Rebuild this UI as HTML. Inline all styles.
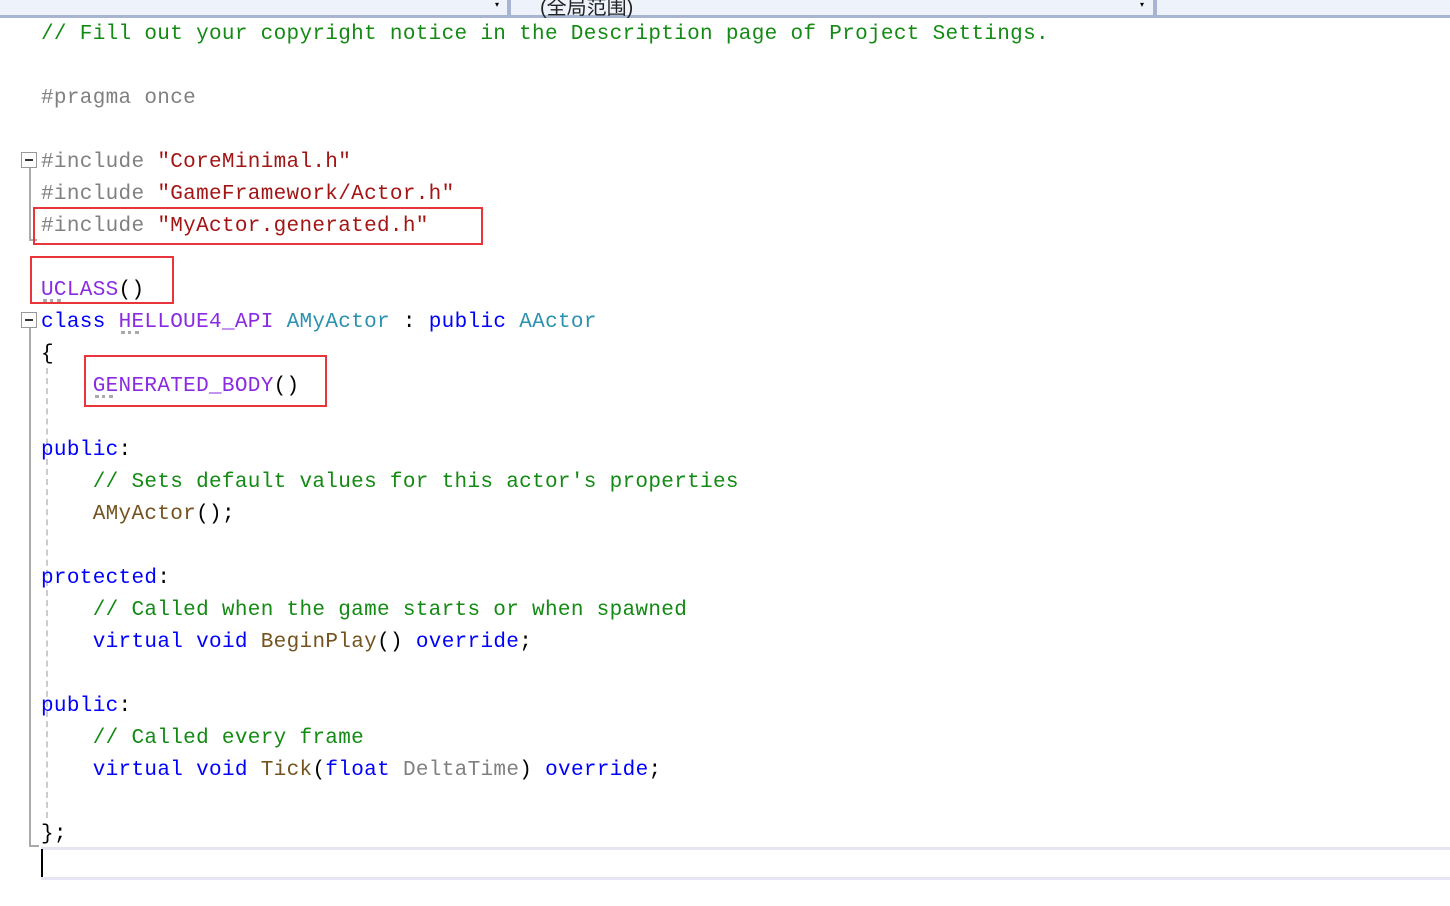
<!DOCTYPE html>
<html><head><meta charset="utf-8"><style>
html,body{margin:0;padding:0;background:#fff;width:1450px;height:906px;overflow:hidden;position:relative}
.bar{position:absolute;left:0;top:0;width:1450px;height:15px;background:#eef2fb;border-bottom:3px solid #a7b5d1}
.sep{position:absolute;top:0;width:4px;height:15px;background:#a7b5d1}
.bt{position:absolute;left:540px;top:-9px;font:20px "Liberation Sans","Noto Sans CJK SC",sans-serif;color:#222}
.l{position:absolute;left:41px;height:32px;line-height:32px;white-space:pre;font-family:"Liberation Mono","Noto Serif CJK SC",monospace;font-size:21px;letter-spacing:0.32px;color:#000}
.c{color:#138a13}.p{color:#808080}.s{color:#a31515}.k{color:#0000ff}.m{color:#8a2be2}.t{color:#2b91af}.f{color:#74531f}
.box{position:absolute;border:2px solid #e8353b;box-sizing:border-box}
.fold{position:absolute;width:14px;height:14px;border:1px solid #999;background:#fff}
.fold:after{content:"";position:absolute;left:3px;top:6px;width:8px;height:2px;background:#333}
.vl{position:absolute;width:2px;background:#aaa}
.dl{position:absolute;width:0;border-left:2px dashed #ccc}
.dots{position:absolute;height:3px;border-top:3px dotted #aaa}
</style></head><body>
<div class="bar"></div>
<div class="sep" style="left:507px"></div>
<div class="sep" style="left:1153px"></div>
<div class="bt">(全局范围)</div>
<span style="position:absolute;left:495px;top:0;font-size:8px">▾</span>
<span style="position:absolute;left:1140px;top:0;font-size:8px">▾</span>

<div class="fold" style="left:21px;top:152px"></div>
<div class="vl" style="left:29px;top:168px;height:73px"></div>
<div class="vl" style="left:29px;top:239px;width:8px;height:2px"></div>
<div class="fold" style="left:21px;top:312px"></div>
<div class="vl" style="left:29px;top:328px;height:519px"></div>
<div class="vl" style="left:29px;top:845px;width:10px;height:2px"></div>
<div class="dl" style="left:46px;top:368px;height:450px"></div>

<div style="position:absolute;left:41px;top:847px;width:1409px;height:27px;border-top:3px solid #e6e6f2;border-bottom:3px solid #e6e6f2"></div>
<div style="position:absolute;left:41px;top:849px;width:2px;height:28px;background:#000"></div>

<div class="l" style="top:19px"><span class="c">// Fill out your copyright notice in the Description page of Project Settings.</span></div>
<div class="l" style="top:83px"><span class="p">#pragma once</span></div>
<div class="l" style="top:147px"><span class="p">#include </span><span class="s">"CoreMinimal.h"</span></div>
<div class="l" style="top:179px"><span class="p">#include </span><span class="s">"GameFramework/Actor.h"</span></div>
<div class="l" style="top:211px"><span class="p">#include </span><span class="s">"MyActor.generated.h"</span></div>
<div class="l" style="top:275px"><span class="m">UCLASS</span>()</div>
<div class="l" style="top:307px"><span class="k">class</span> <span class="m">HELLOUE4_API</span> <span class="t">AMyActor</span> : <span class="k">public</span> <span class="t">AActor</span></div>
<div class="l" style="top:339px">{</div>
<div class="l" style="top:371px">    <span class="m">GENERATED_BODY</span>()</div>
<div class="l" style="top:435px"><span class="k">public</span>:</div>
<div class="l" style="top:467px">    <span class="c">// Sets default values for this actor's properties</span></div>
<div class="l" style="top:499px">    <span class="f">AMyActor</span>();</div>
<div class="l" style="top:563px"><span class="k">protected</span>:</div>
<div class="l" style="top:595px">    <span class="c">// Called when the game starts or when spawned</span></div>
<div class="l" style="top:627px">    <span class="k">virtual</span> <span class="k">void</span> <span class="f">BeginPlay</span>() <span class="k">override</span>;</div>
<div class="l" style="top:691px"><span class="k">public</span>:</div>
<div class="l" style="top:723px">    <span class="c">// Called every frame</span></div>
<div class="l" style="top:755px">    <span class="k">virtual</span> <span class="k">void</span> <span class="f">Tick</span>(<span class="k">float</span> <span class="p">DeltaTime</span>) <span class="k">override</span>;</div>
<div class="l" style="top:819px">};</div>

<div class="dots" style="left:43px;top:299px;width:18px"></div>
<div class="dots" style="left:121px;top:331px;width:18px"></div>
<div class="dots" style="left:95px;top:395px;width:18px"></div>

<div class="box" style="left:33px;top:207px;width:450px;height:38px"></div>
<div class="box" style="left:30px;top:256px;width:144px;height:48px"></div>
<div class="box" style="left:84px;top:355px;width:243px;height:52px"></div>
</body></html>
